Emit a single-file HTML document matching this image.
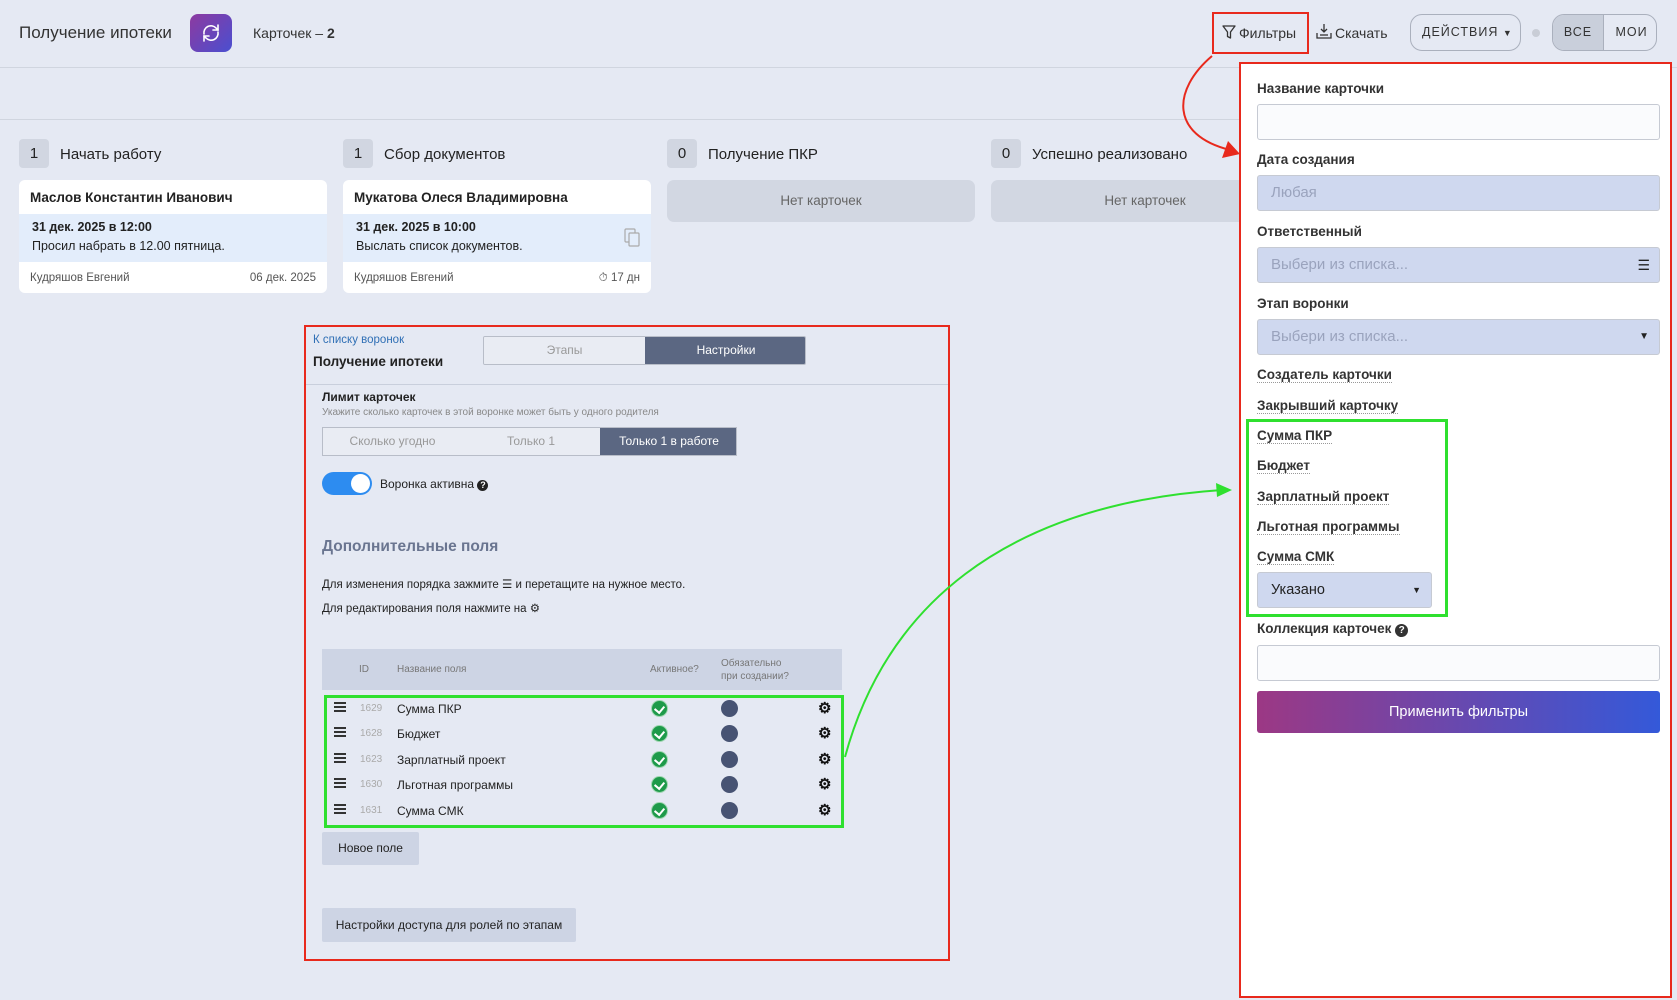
<!DOCTYPE html>
<html><head><meta charset="utf-8">
<style>
*{box-sizing:border-box;margin:0;padding:0}
body{width:1677px;height:1000px;overflow:hidden;background:#e5e9f3;font-family:"Liberation Sans","Noto Sans CJK SC",sans-serif;color:#222;position:relative}
.a{position:absolute;white-space:nowrap}
.badge{position:absolute;width:30px;height:29px;background:#d1d6e1;border-radius:4px;text-align:center;line-height:29px;font-size:15px}
.colt{position:absolute;font-size:15px;color:#222}
.card{position:absolute;width:308px;height:113px;background:#fff;border-radius:6px;overflow:hidden}
.card .n{position:absolute;left:11px;top:10px;font-size:13.5px;font-weight:bold}
.card .b{position:absolute;left:0;top:34px;width:100%;height:48px;background:#e3edfb}
.card .d{position:absolute;left:13px;top:6px;font-size:12.5px;font-weight:bold}
.card .t{position:absolute;left:13px;top:25px;font-size:12.5px}
.card .f{position:absolute;top:92px;font-size:11.5px;color:#555}
.empty{position:absolute;width:308px;height:42px;background:#d2d7e2;border-radius:7px;text-align:center;line-height:42px;font-size:13.5px;color:#666}
.lbl{position:absolute;left:1257px;font-size:13.5px;font-weight:bold;color:#333}
.dot{border-bottom:1px dotted #999}
.inp{position:absolute;left:1257px;width:403px;height:36px;border:1px solid #c6cad3;border-radius:3px;background:#fafbfd}
.sel{background:#cfd8ef;color:#9aa3bd;font-size:15px;padding-left:13px;line-height:34px}
.row{position:absolute;left:324px;width:520px;height:25px;font-size:12px}
.row .h{position:absolute;left:10px;top:6px;width:12px;height:10px;border-top:2px solid #333;border-bottom:2px solid #333}
.row .h:after{content:"";position:absolute;left:0;top:2px;width:12px;height:2px;background:#333}
.row .id{position:absolute;left:36px;top:7px;color:#aaa;font-size:10px}
.row .nm{position:absolute;left:73px;top:6px}
.row .ck{position:absolute;left:328px;top:5px;width:15px;height:15px;border-radius:50%;background:#1e9a4a;box-shadow:0 0 0 1px #9fd6b0}
.row .ck:after{content:"";position:absolute;left:4px;top:3px;width:5px;height:7px;border-right:2px solid #fff;border-bottom:2px solid #fff;transform:rotate(40deg)}
.row .cc{position:absolute;left:397px;top:4px;width:17px;height:17px;border-radius:50%;background:#475373}
.row .g{position:absolute;left:494px;top:3px;font-size:15px;color:#111;font-weight:bold}
</style></head><body>
<div class="a" style="left:19px;top:23px;font-size:17px;color:#333">Получение ипотеки</div>
<div class="a" style="left:190px;top:14px;width:42px;height:38px;border-radius:8px;background:linear-gradient(135deg,#8d3aa0,#4a4fd0)">
<svg width="42" height="38" viewBox="0 0 42 38"><g fill="none" stroke="#fff" stroke-width="1.6" stroke-linecap="round"><path d="M14 20a7 7 0 0 1 12-6l2 2M28 18a7 7 0 0 1-12 6l-2-2"/><path d="M28 11v5h-5M14 27v-5h5"/></g></svg></div>
<div class="a" style="left:253px;top:25px;font-size:14px;color:#333">Карточек – <b>2</b></div>
<div class="a" style="left:0;top:67px;width:1677px;height:1px;background:#d0d5df"></div>
<div class="a" style="left:0;top:119px;width:1240px;height:1px;background:#d0d5df"></div>

<div class="a" style="left:1212px;top:12px;width:97px;height:42px;border:2px solid #e8291c"></div>
<svg class="a" style="left:1222px;top:25px" width="14" height="15" viewBox="0 0 14 15"><path d="M1 1h12L8.5 7v6l-3-1.5V7z" fill="none" stroke="#333" stroke-width="1.3" stroke-linejoin="round"/></svg>
<div class="a" style="left:1239px;top:25px;font-size:14px;color:#333">Фильтры</div>
<svg class="a" style="left:1316px;top:23px" width="16" height="16" viewBox="0 0 16 16"><g fill="none" stroke="#333" stroke-width="1.3"><path d="M1 10v5h14v-5"/><path d="M8 1v8M5 6l3 3 3-3"/><path d="M4 12h8"/></g></svg>
<div class="a" style="left:1335px;top:25px;font-size:14px;color:#333">Скачать</div>
<div class="a" style="left:1410px;top:14px;width:111px;height:37px;border:1px solid #aab0bd;border-radius:12px;font-size:12.5px;letter-spacing:1px;color:#333;line-height:35px;padding-left:11px">ДЕЙСТВИЯ <span style="font-size:9px">▼</span></div>
<div class="a" style="left:1532px;top:29px;width:8px;height:8px;border-radius:50%;background:#c9cdd6"></div>
<div class="a" style="left:1552px;top:14px;width:105px;height:37px;border:1px solid #aab0bd;border-radius:12px;overflow:hidden;font-size:12.5px;letter-spacing:1px;color:#333">
<div class="a" style="left:0;top:0;width:51px;height:35px;background:#c9cfdb;border-right:1px solid #aab0bd;text-align:center;line-height:35px">ВСЕ</div>
<div class="a" style="left:52px;top:0;width:53px;height:35px;text-align:center;line-height:35px">МОИ</div></div>

<div class="badge" style="left:19px;top:139px">1</div><div class="colt" style="left:60px;top:146px">Начать работу</div>
<div class="badge" style="left:343px;top:139px">1</div><div class="colt" style="left:384px;top:146px">Сбор документов</div>
<div class="badge" style="left:667px;top:139px">0</div><div class="colt" style="left:708px;top:146px">Получение ПКР</div>
<div class="badge" style="left:991px;top:139px">0</div><div class="colt" style="left:1032px;top:146px">Успешно реализовано</div>

<div class="card" style="left:19px;top:180px"><div class="n">Маслов Константин Иванович</div><div class="b"><div class="d">31 дек. 2025 в 12:00</div><div class="t">Просил набрать в 12.00 пятница.</div></div><div class="f" style="left:11px">Кудряшов Евгений</div><div class="f" style="right:11px">06 дек. 2025</div></div>
<div class="card" style="left:343px;top:180px"><div class="n">Мукатова Олеся Владимировна</div><div class="b"><div class="d">31 дек. 2025 в 10:00</div><div class="t">Выслать список документов.</div>
<svg class="a" style="left:281px;top:13px" width="16" height="20" viewBox="0 0 16 20"><g fill="none" stroke="#aaa" stroke-width="1.2"><rect x="1" y="2" width="10" height="13" rx="1"/><rect x="5" y="6" width="10" height="13" rx="1" fill="#e3edfb"/></g></svg></div>
<div class="f" style="left:11px">Кудряшов Евгений</div><div class="f" style="right:11px">⏱ 17 дн</div></div>
<div class="empty" style="left:667px;top:180px">Нет карточек</div>
<div class="empty" style="left:991px;top:180px">Нет карточек</div>

<div class="a" style="left:304px;top:325px;width:646px;height:636px;border:2px solid #e8291c"></div>
<div class="a" style="left:313px;top:334px;font-size:11.5px;color:#2f6fb5">К списку воронок</div>
<div class="a" style="left:313px;top:354px;font-size:13.5px;font-weight:bold">Получение ипотеки</div>
<div class="a" style="left:483px;top:336px;width:323px;height:29px;border:1px solid #b8bdc8;border-radius:2px;overflow:hidden;font-size:12px">
<div class="a" style="left:0;top:0;width:161px;height:29px;background:#e9ecf3;color:#999;text-align:center;line-height:27px">Этапы</div>
<div class="a" style="left:161px;top:0;width:162px;height:29px;background:#5b6782;color:#fff;text-align:center;line-height:27px">Настройки</div></div>
<div class="a" style="left:306px;top:384px;width:642px;height:1px;background:#c9cfdc"></div>
<div class="a" style="left:322px;top:390px;font-size:12px;font-weight:bold">Лимит карточек</div>
<div class="a" style="left:322px;top:407px;font-size:10px;color:#888">Укажите сколько карточек в этой воронке может быть у одного родителя</div>
<div class="a" style="left:322px;top:427px;width:415px;height:29px;border:1px solid #b8bdc8;overflow:hidden;font-size:12px;background:#e9ecf3">
<div class="a" style="left:0;top:0;width:139px;text-align:center;line-height:27px;color:#999">Сколько угодно</div>
<div class="a" style="left:139px;top:0;width:138px;text-align:center;line-height:27px;color:#999">Только 1</div>
<div class="a" style="left:277px;top:0;width:138px;height:29px;background:#5b6782;color:#fff;text-align:center;line-height:27px">Только 1 в работе</div></div>
<div class="a" style="left:322px;top:472px;width:50px;height:23px;border-radius:12px;background:#2d8cf0"><div class="a" style="left:29px;top:2px;width:19px;height:19px;border-radius:50%;background:#fff"></div></div>
<div class="a" style="left:380px;top:477px;font-size:12px">Воронка активна <span style="display:inline-block;width:11px;height:11px;border-radius:50%;background:#222;color:#fff;font-size:9px;text-align:center;line-height:11px;font-weight:bold">?</span></div>
<div class="a" style="left:322px;top:538px;font-size:15.5px;font-weight:bold;color:#6a7590">Дополнительные поля</div>
<div class="a" style="left:322px;top:577px;font-size:11.5px">Для изменения порядка зажмите ☰ и перетащите на нужное место.</div>
<div class="a" style="left:322px;top:601px;font-size:11.5px">Для редактирования поля нажмите на ⚙</div>
<div class="a" style="left:322px;top:649px;width:520px;height:41px;background:#cdd4e4;font-size:10px;color:#777">
<div class="a" style="left:37px;top:15px">ID</div><div class="a" style="left:75px;top:15px">Название поля</div><div class="a" style="left:328px;top:15px">Активное?</div><div class="a" style="left:399px;top:8px;line-height:13px">Обязательно<br>при создании?</div></div>
<div class="row" style="top:696px"><div class="h"></div><div class="id">1629</div><div class="nm">Сумма ПКР</div><div class="ck"></div><div class="cc"></div><div class="g">⚙</div></div>
<div class="row" style="top:721px"><div class="h"></div><div class="id">1628</div><div class="nm">Бюджет</div><div class="ck"></div><div class="cc"></div><div class="g">⚙</div></div>
<div class="row" style="top:747px"><div class="h"></div><div class="id">1623</div><div class="nm">Зарплатный проект</div><div class="ck"></div><div class="cc"></div><div class="g">⚙</div></div>
<div class="row" style="top:772px"><div class="h"></div><div class="id">1630</div><div class="nm">Льготная программы</div><div class="ck"></div><div class="cc"></div><div class="g">⚙</div></div>
<div class="row" style="top:798px"><div class="h"></div><div class="id">1631</div><div class="nm">Сумма СМК</div><div class="ck"></div><div class="cc"></div><div class="g">⚙</div></div>
<div class="a" style="left:324px;top:695px;width:520px;height:133px;border:3px solid #2fe02f"></div>
<div class="a" style="left:322px;top:832px;width:97px;height:33px;background:#cdd4e4;border-radius:2px;font-size:12px;text-align:center;line-height:33px">Новое поле</div>
<div class="a" style="left:322px;top:908px;width:254px;height:34px;background:#cdd4e4;border-radius:2px;font-size:12px;text-align:center;line-height:34px">Настройки доступа для ролей по этапам</div>

<div class="a" style="left:1239px;top:62px;width:433px;height:936px;background:#fff;border:2px solid #e8291c"></div>
<div class="lbl" style="top:81px">Название карточки</div>
<div class="inp" style="top:104px"></div>
<div class="lbl" style="top:152px">Дата создания</div>
<div class="inp sel" style="top:175px">Любая</div>
<div class="lbl" style="top:224px">Ответственный</div>
<div class="inp sel" style="top:247px">Выбери из списка...<span style="position:absolute;right:9px;top:0;color:#222;font-size:14px">☰</span></div>
<div class="lbl" style="top:296px">Этап воронки</div>
<div class="inp sel" style="top:319px">Выбери из списка...<span style="position:absolute;right:10px;top:0;color:#222;font-size:10px">▼</span></div>
<div class="lbl dot" style="top:367px">Создатель карточки</div>
<div class="lbl dot" style="top:398px">Закрывший карточку</div>
<div class="lbl dot" style="top:428px">Сумма ПКР</div>
<div class="lbl dot" style="top:458px">Бюджет</div>
<div class="lbl dot" style="top:489px">Зарплатный проект</div>
<div class="lbl dot" style="top:519px">Льготная программы</div>
<div class="lbl dot" style="top:549px">Сумма СМК</div>
<div class="inp" style="top:572px;width:175px;background:#cfd8ef;font-size:14.5px;color:#222;padding-left:13px;line-height:34px">Указано<span style="position:absolute;right:10px;top:0;font-size:9px">▼</span></div>
<div class="a" style="left:1246px;top:419px;width:202px;height:198px;border:3px solid #2fe02f"></div>
<div class="lbl" style="top:621px">Коллекция карточек <span style="display:inline-block;width:13px;height:13px;border-radius:50%;background:#333;color:#fff;font-size:10px;text-align:center;line-height:13px">?</span></div>
<div class="inp" style="top:645px"></div>
<div class="a" style="left:1257px;top:691px;width:403px;height:42px;border-radius:3px;background:linear-gradient(90deg,#9c3884,#3459d9);color:#fff;font-size:14.5px;text-align:center;line-height:42px">Применить фильтры</div>

<svg class="a" style="left:0;top:0" width="1677" height="1000">
<path d="M1212 56 C1172 90 1170 135 1230 150" fill="none" stroke="#e8291c" stroke-width="2"/>
<path d="M1240 154 L1222 158 L1228 141 Z" fill="#e8291c"/>
<path d="M845 757 C885 610 1000 505 1222 490" fill="none" stroke="#2fe02f" stroke-width="2"/>
<path d="M1232 490 L1216 483 L1217 497 Z" fill="#2fe02f"/>
</svg>
</body></html>
